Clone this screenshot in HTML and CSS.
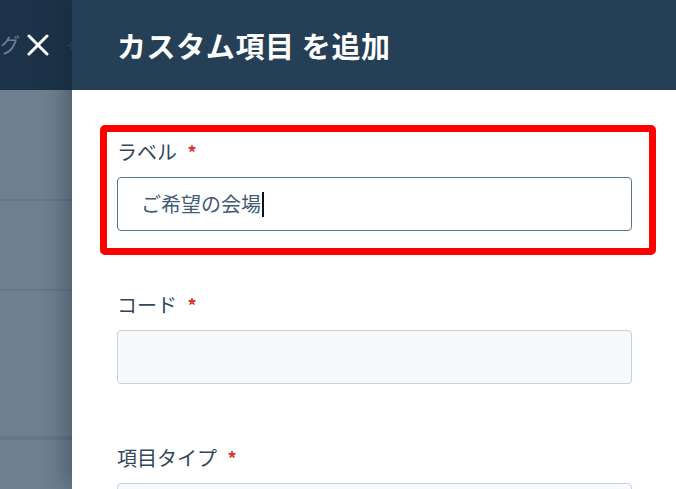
FILE: index.html
```html
<!DOCTYPE html>
<html lang="ja">
<head>
    <meta charset="UTF-8">
    <meta name="viewport" content="width=device-width, initial-scale=1.0">
    <title>カスタム項目を追加</title>
    <link rel="stylesheet" href="styles.css">
</head>
<body>
    <div class="backdrop">
        <div class="backdrop-top">
            <span class="tab-text">ログ</span>
            <svg class="close" width="22" height="22" viewBox="0 0 22 22">
                <path d="M2 2 L20 20 M20 2 L2 20" stroke="#fff" stroke-width="3" stroke-linecap="round"/>
            </svg>
            <span class="chevron">+</span>
        </div>
        <div class="backdrop-rows">
            <div class="row r1"></div>
            <div class="row r2"></div>
            <div class="row r3"></div>
            <div class="row"></div>
        </div>
    </div>

    <div class="panel">
        <div class="panel-header">
            <h1>カスタム項目 を追加</h1>
        </div>
        <form class="panel-body">
            <div class="field highlight">
                <label for="label">ラベル <span class="req">*</span></label>
                <div class="input focused" id="label">ご希望の会場<span class="caret"></span></div>
            </div>

            <div class="field">
                <label for="code">コード <span class="req">*</span></label>
                <div class="input" id="code"></div>
            </div>

            <div class="field">
                <label for="type">項目タイプ <span class="req">*</span></label>
                <div class="input" id="type"></div>
            </div>
        </form>
    </div>
</body>
</html>
```

FILE: styles.css
```css
body {
    margin: 0;
    display: flex;
    height: 100vh;
    overflow: hidden;
    font-family: "Noto Sans CJK JP", "Noto Sans", sans-serif;
    color: #33475b;
}
.backdrop {
    width: 72px;
    flex-shrink: 0;
    display: flex;
    flex-direction: column;
    background: #6f808e;
}
.backdrop-top {
    height: 90px;
    background: #1c3248;
    position: relative;
    overflow: hidden;
}
.tab-text {
    position: absolute;
    right: 52px;
    top: 30px;
    font-size: 20px;
    color: #6d8196;
    white-space: nowrap;
}
.close {
    position: absolute;
    left: 27px;
    top: 34px;
}
.chevron {
    position: absolute;
    left: 66px;
    top: 31px;
    font-size: 18px;
    color: #2f4459;
}
.backdrop-rows {
    flex: 1;
}
.row {
    border-bottom: 2px solid #66778a;
}
.r1 { height: 109px; }
.r2 { height: 88px; }
.r3 { height: 145px; }

.panel {
    flex: 1;
    background: #fff;
    box-shadow: -8px 0 22px rgba(20, 35, 50, 0.35);
    position: relative;
}
.panel-header {
    height: 90px;
    background: #253f57;
    display: flex;
    align-items: center;
    padding-left: 45px;
}
.panel-header h1 {
    margin: 0;
    color: #fff;
    font-size: 29px;
    font-weight: bold;
    letter-spacing: 0.6px;
}
.panel-body {
    padding: 35px 44px 0 45px;
}
.field {
    margin-bottom: 62px;
}
.field label {
    display: block;
    font-size: 20px;
    line-height: 24px;
    margin-bottom: 13px;
}
.req {
    color: #e0312e;
    font-size: 18px;
    font-weight: bold;
    margin-left: 6px;
    vertical-align: top;
}
.input {
    height: 52px;
    box-sizing: content-box;
    border: 1px solid #c5d3de;
    border-radius: 4px;
    background: #f7f9fb;
    font-size: 20px;
    line-height: 52px;
    padding-left: 23px;
    color: #425b76;
    display: flex;
    align-items: center;
}
.input.focused {
    border-color: #5b7590;
    background: #fff;
}
.caret {
    display: inline-block;
    width: 2px;
    height: 25px;
    background: #111;
    margin-left: 1px;
}
.field.highlight {
    border: 7px solid #ff0000;
    border-radius: 5px;
    margin: 0 -24px 38px -17px;
    padding: 8px 17px 17px 10px;
}
```
